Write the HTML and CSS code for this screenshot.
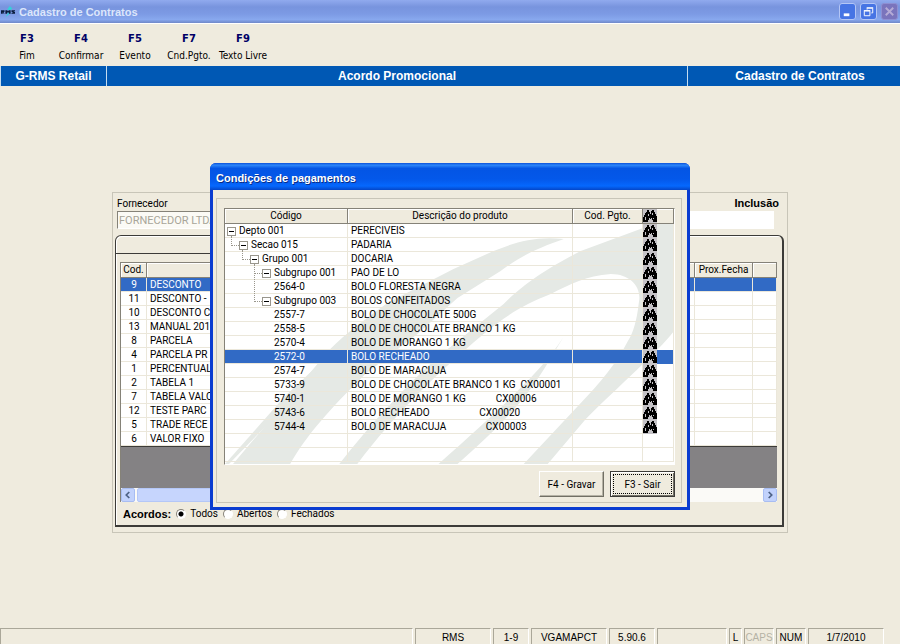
FILE: index.html
```html
<!DOCTYPE html>
<html lang="pt-BR">
<head>
    <meta charset="UTF-8">
    <meta name="viewport" content="width=device-width, initial-scale=1.0">
    <title>Cadastro de Contratos</title>
    <link rel="stylesheet" href="styles.css">
</head>
<body>
    <!-- Shared icons -->
    <svg class="defs" width="0" height="0">
        <symbol id="binoculars" viewBox="0 0 14 14">
            <rect width="14" height="14" fill="#c4c2c6"/>
            <path d="M4 1h2v2h1v2h1V2h1V1h2v2h1v2h1v2h1v6h-4v-2H9V9H8v1H7V9H6v2H5v2H0V8h1V6h1V4h1V3h1z" fill="#000"/>
            <path d="M2 8h1v3H2zM5 5h1v2H5zM9 4h1v2H9zM10 9h1v1h-1z" fill="#c4c2c6"/>
        </symbol>
    </svg>

    <div class="app">
        <header class="titlebar">
            <svg class="logo" viewBox="0 0 16 16">
                <path d="M10 1L7 5l3 1-5 8 6-5-2-2 4-3z" fill="#35d0d8"/>
                <path d="M0 6h4v2H3l1 2H3L2 8v2H0zM5 6h2l1 1 1-1h2v4H9V8L8 9 7 8v2H5zM12 6h4v1h-2l2 1v2h-4V9h2l-2-1z" fill="#0a1c3c"/>
            </svg>
            <h1>Cadastro de Contratos</h1>
            <button class="win-btn" type="button" aria-label="Minimizar"><svg viewBox="0 0 16 16"><path d="M4 10h6v3H4z" fill="#fff"/></svg></button>
            <button class="win-btn" type="button" aria-label="Restaurar"><svg viewBox="0 0 16 16"><path d="M6.500 6V4.500h6v5H11M6 4h7M3.500 7.500h6v5h-6zM3 7h7" fill="none" stroke="#fff"/></svg></button>
            <button class="win-btn close" type="button" aria-label="Fechar"><svg viewBox="0 0 16 16"><path d="M4 4l8 8M12 4l-8 8" stroke="#b5abd6" stroke-width="2"/></svg></button>
        </header>

        <nav class="toolbar">
            <button type="button"><b>F3</b>Fim</button>
            <button type="button"><b>F4</b>Confirmar</button>
            <button type="button"><b>F5</b>Evento</button>
            <button type="button"><b>F7</b>Cnd.Pgto.</button>
            <button type="button"><b>F9</b>Texto Livre</button>
        </nav>

        <div class="banner">
            <span class="banner-side left">G-RMS Retail</span>
            <span class="banner-main">Acordo Promocional</span>
            <span class="banner-side right">Cadastro de Contratos</span>
        </div>

        <main class="workspace">
            <section class="panel">
                <div class="panel-head">
                    <label for="fornecedor">Fornecedor</label>
                    <strong>Inclusão</strong>
                </div>
                <div class="panel-fields">
                    <input type="text" id="fornecedor" value="FORNECEDOR LTDA" disabled>
                    <input type="text" class="plain" aria-label="Situação">
                </div>

                <div class="tab-frame">
                    <div class="tab-strip"></div>
                    <div class="list-box">
                        <table class="grid agreements">
                            <colgroup>
                                <col class="c-cod">
                                <col>
                                <col class="c-date">
                                <col class="c-end">
                            </colgroup>
                            <thead>
                                <tr><th>Cod.</th><th></th><th>Prox.Fecha</th><th></th></tr>
                            </thead>
                            <tbody>
                                <tr class="selected"><td>9</td><td>DESCONTO</td><td></td><td></td></tr>
                                <tr><td>11</td><td>DESCONTO -</td><td></td><td></td></tr>
                                <tr><td>10</td><td>DESCONTO C</td><td></td><td></td></tr>
                                <tr><td>13</td><td>MANUAL 2010</td><td></td><td></td></tr>
                                <tr><td>8</td><td>PARCELA</td><td></td><td></td></tr>
                                <tr><td>4</td><td>PARCELA PR</td><td></td><td></td></tr>
                                <tr><td>1</td><td>PERCENTUAL</td><td></td><td></td></tr>
                                <tr><td>2</td><td>TABELA 1</td><td></td><td></td></tr>
                                <tr><td>7</td><td>TABELA VALO</td><td></td><td></td></tr>
                                <tr><td>12</td><td>TESTE PARC</td><td></td><td></td></tr>
                                <tr><td>5</td><td>TRADE RECE</td><td></td><td></td></tr>
                                <tr><td>6</td><td>VALOR FIXO</td><td></td><td></td></tr>
                            </tbody>
                        </table>
                        <div class="list-empty"></div>
                        <div class="scrollbar">
                            <button type="button" aria-label="Rolar para a esquerda"><svg viewBox="0 0 14 14"><path d="M8.500 3.500L5 7l3.500 3.500" fill="none" stroke="#4d6185" stroke-width="2"/></svg></button>
                            <div class="thumb"></div>
                            <button type="button" aria-label="Rolar para a direita"><svg viewBox="0 0 14 14"><path d="M5.500 3.500L9 7l-3.500 3.500" fill="none" stroke="#4d6185" stroke-width="2"/></svg></button>
                        </div>
                    </div>
                    <div class="filters">
                        <strong>Acordos:</strong>
                        <label><input type="radio" name="acordos" checked>Todos</label>
                        <label><input type="radio" name="acordos">Abertos</label>
                        <label><input type="radio" name="acordos">Fechados</label>
                    </div>
                </div>
            </section>

            <!-- Payment terms dialog -->
            <div class="overlay">
                <section class="dialog" role="dialog" aria-labelledby="dialog-title">
                    <h2 id="dialog-title">Condições de pagamentos</h2>
                    <div class="dialog-body">
                        <div class="dialog-frame">
                            <div class="product-box">
                                <svg class="watermark" viewBox="0 0 448 240" preserveAspectRatio="none">
                                    <path d="M338 15C310 12 290 18 268 27L228 45 162 79C140 95 122 108 104 126L8 240H65C82 210 105 185 140 150L192 110 232 74 275 47C295 32 310 25 338 15z"/>
                                    <path d="M124 112L60 172 0 240 4 240 66 176z"/>
                                    <path d="M448 0H428L355 27C310 50 290 68 278 80L210 135C180 163 145 200 114 240H132C170 190 205 155 258 110C285 88 300 80 325 70C345 60 360 52 385 50C405 50 416 64 413 78Q410 105 402 117C390 140 375 158 355 179L298 240H322L360 195C395 160 430 130 448 107z"/>
                                    <path d="M342 106C325 135 300 163 213 240H232C270 206 300 178 325 134z"/>
                                </svg>
                                <table class="grid products">
                                    <colgroup>
                                        <col class="c-code">
                                        <col>
                                        <col class="c-pay">
                                        <col class="c-find">
                                    </colgroup>
                                    <thead>
                                        <tr><th>Código</th><th>Descrição do produto</th><th>Cod. Pgto.</th><th class="find"><svg><use href="#binoculars"/></svg></th></tr>
                                    </thead>
                                    <tbody>
                                        <tr><td class="lv0"><i class="node root"></i>Depto 001</td><td>PERECIVEIS</td><td></td><td class="find"><svg><use href="#binoculars"/></svg></td></tr>
                                        <tr><td class="lv1"><i class="node"></i>Secao 015</td><td>PADARIA</td><td></td><td class="find"><svg><use href="#binoculars"/></svg></td></tr>
                                        <tr><td class="lv2"><i class="node"></i>Grupo 001</td><td>DOCARIA</td><td></td><td class="find"><svg><use href="#binoculars"/></svg></td></tr>
                                        <tr><td class="lv3"><i class="node"></i>Subgrupo 001</td><td>PAO DE LO</td><td></td><td class="find"><svg><use href="#binoculars"/></svg></td></tr>
                                        <tr><td class="leaf">2564-0</td><td>BOLO FLORESTA NEGRA</td><td></td><td class="find"><svg><use href="#binoculars"/></svg></td></tr>
                                        <tr><td class="lv3"><i class="node long"></i>Subgrupo 003</td><td>BOLOS CONFEITADOS</td><td></td><td class="find"><svg><use href="#binoculars"/></svg></td></tr>
                                        <tr><td class="leaf">2557-7</td><td>BOLO DE CHOCOLATE 500G</td><td></td><td class="find"><svg><use href="#binoculars"/></svg></td></tr>
                                        <tr><td class="leaf">2558-5</td><td>BOLO DE CHOCOLATE BRANCO 1 KG</td><td></td><td class="find"><svg><use href="#binoculars"/></svg></td></tr>
                                        <tr><td class="leaf">2570-4</td><td>BOLO DE MORANGO 1 KG</td><td></td><td class="find"><svg><use href="#binoculars"/></svg></td></tr>
                                        <tr class="selected"><td class="leaf">2572-0</td><td>BOLO RECHEADO</td><td></td><td class="find"><svg><use href="#binoculars"/></svg></td></tr>
                                        <tr><td class="leaf">2574-7</td><td>BOLO DE MARACUJA</td><td></td><td class="find"><svg><use href="#binoculars"/></svg></td></tr>
                                        <tr><td class="leaf">5733-9</td><td>BOLO DE CHOCOLATE BRANCO 1 KG  CX00001</td><td></td><td class="find"><svg><use href="#binoculars"/></svg></td></tr>
                                        <tr><td class="leaf">5740-1</td><td>BOLO DE MORANGO 1 KG            CX00006</td><td></td><td class="find"><svg><use href="#binoculars"/></svg></td></tr>
                                        <tr><td class="leaf">5743-6</td><td>BOLO RECHEADO                    CX00020</td><td></td><td class="find"><svg><use href="#binoculars"/></svg></td></tr>
                                        <tr><td class="leaf">5744-4</td><td>BOLO DE MARACUJA                CX00003</td><td></td><td class="find"><svg><use href="#binoculars"/></svg></td></tr>
                                        <tr><td></td><td></td><td></td><td></td></tr>
                                        <tr><td></td><td></td><td></td><td></td></tr>
                                    </tbody>
                                </table>
                            </div>
                            <div class="dialog-actions">
                                <button type="button">F4 - Gravar</button>
                                <button type="button" class="default">F3 - Sair</button>
                            </div>
                        </div>
                    </div>
                </section>
            </div>
        </main>

        <footer class="statusbar">
            <span class="grow"></span>
            <span class="w-xl">RMS</span>
            <span class="w-n">1-9</span>
            <span class="w-xl">VGAMAPCT</span>
            <span class="w-m">5.90.6</span>
            <span class="w-l"></span>
            <span class="w-xs">L</span>
            <span class="w-s off">CAPS</span>
            <span class="w-s">NUM</span>
            <span class="w-xl">1/7/2010</span>
        </footer>
    </div>
</body>
</html>
```

FILE: styles.css
```css
* {
    box-sizing: border-box;
}

body {
    margin: 0;
    background-color: #efebde;
    color: #000;
    font-family: Roboto, "Liberation Sans", sans-serif;
    font-size: 10px;
}

button, input {
    font: inherit;
    color: inherit;
}

button {
    padding: 0;
    border: none;
    background: none;
}

.defs {
    position: absolute;
}

.app {
    display: flex;
    flex-direction: column;
    min-height: 100vh;
}

/* Window title */
.titlebar {
    display: flex;
    align-items: center;
    gap: 4px;
    height: 23px;
    padding: 0 2px 0 1px;
    background: linear-gradient(#90aaee, #7894de 30%, #7c9ae4 60%, #88a8ee 85%, #7088c8);
}

.logo {
    width: 14px;
    height: 16px;
}

.titlebar h1 {
    flex: 1;
    margin: 0;
    color: #dce6fb;
    font: bold 11px "Liberation Sans", sans-serif;
}

.win-btn {
    width: 17px;
    height: 17px;
    border: 1px solid #b4c6f6;
    border-radius: 3px;
    background-color: #4674e4;
}

.win-btn svg {
    display: block;
    width: 15px;
    height: 15px;
}

.win-btn.close {
    border-color: #8e8fd2;
    background-color: #7a74bc;
}

/* Function keys */
.toolbar {
    display: flex;
    height: 43px;
    padding: 3px 0 0;
    border-top: 1px solid #fff;
}

.toolbar button {
    width: 54px;
    font: 10px/17px "DejaVu Sans Condensed", sans-serif;
    white-space: nowrap;
}

.toolbar b {
    display: block;
    color: #000066;
    font-family: "DejaVu Sans", sans-serif;
}

.banner {
    display: flex;
    height: 20px;
    background-color: #0058b4;
    color: #fff;
    font: bold 12px/20px "Liberation Sans", sans-serif;
    text-align: center;
}

.banner-main {
    flex: 1;
    border-left: 1px solid #c4dcf0;
    border-right: 1px solid #c4dcf0;
}

.banner-side.left {
    width: 106px;
    border-left: 1px solid #c4dcf0;
}

.banner-side.right {
    width: 212px;
    padding-left: 12px;
}

/* Contract panel */
.workspace {
    position: relative;
    flex: 1;
    padding: 106px 112px 0;
}

.panel {
    padding: 3px 3px 5px 2px;
    border: 1px solid #c8c5b8;
}

.panel-head {
    display: flex;
    justify-content: space-between;
    padding: 0 5px 0 2px;
    line-height: 15px;
}

.panel-head strong {
    font: bold 11px/15px "Liberation Sans", sans-serif;
}

.panel-fields {
    display: flex;
    justify-content: space-between;
    padding: 0 10px 0 2px;
}

.panel-fields input {
    width: 320px;
    height: 18px;
    padding: 0 1px;
    border: 1px solid #fff;
    border-top-color: #858278;
    border-left-color: #858278;
    background-color: #fbfaf5;
    font-size: 11px;
}

.panel-fields input:disabled {
    color: #a8a599;
}

.panel-fields .plain {
    border-color: #fff;
    background-color: #fff;
}

.tab-frame {
    margin-top: 6px;
    border: 1px solid #3c3b38;
    border-right-width: 2px;
    border-bottom-width: 2px;
    border-radius: 6px 6px 0 0;
    box-shadow: inset 1px 1px #fff;
}

.tab-strip {
    width: 50%;
    height: 18px;
    border-bottom: 1px solid #3c3b38;
}

.list-box {
    margin: 8px 5px 0 4px;
    border-top: 1px solid #858278;
    border-left: 1px solid #858278;
}

.grid {
    width: 100%;
    border-spacing: 0;
    table-layout: fixed;
    line-height: 13px;
}

.grid th, .grid td {
    height: 14px;
    padding: 0 2px 0 3px;
    overflow: hidden;
    border-right: 1px solid #ebe7da;
    border-bottom: 1px solid #ebe7da;
    white-space: pre;
}

.grid th {
    height: 15px;
    padding: 0 1px;
    border-color: #858278;
    background-color: #efebde;
    box-shadow: inset 1px 1px #fff;
    font-weight: normal;
    line-height: 14px;
    text-align: center;
}

.grid .selected td {
    background-color: #316ac5;
    color: #fff;
}

.agreements td {
    background-color: #fff;
}

.agreements td:first-child {
    text-align: center;
}

.c-cod {
    width: 26px;
}

.c-date {
    width: 58px;
}

.c-end {
    width: 24px;
}

.list-empty {
    height: 42px;
    border-top: 1px solid #3c3b38;
    background-color: #848284;
}

.scrollbar {
    display: flex;
    height: 14px;
    background-color: #fbfaf7;
}

.scrollbar button {
    width: 14px;
    border: 1px solid #a8bdf2;
    border-radius: 2px;
    background-color: #c2d2fc;
}

.scrollbar svg {
    display: block;
    width: 12px;
    height: 12px;
}

.thumb {
    width: 60%;
    margin: 0 auto 0 2px;
    border: 1px solid #b4c7f7;
    border-radius: 2px;
    background-color: #c6d5fd;
}

.filters {
    display: flex;
    align-items: center;
    gap: 5px;
    height: 23px;
    padding-left: 7px;
}

.filters strong {
    font: bold 11px "Liberation Sans", sans-serif;
}

.filters label {
    display: flex;
    align-items: center;
    gap: 4px;
}

.filters input {
    width: 10px;
    height: 10px;
    margin: 0;
    appearance: none;
    border: 1px solid #fff;
    border-top-color: #858278;
    border-left-color: #858278;
    border-radius: 50%;
    background-color: #fff;
}

.filters input:checked {
    background-image: radial-gradient(circle, #000 2px, #fff 3px);
}

/* Dialog */
.overlay {
    position: absolute;
    inset: 0;
    display: flex;
    justify-content: center;
    align-items: flex-start;
    padding-top: 77px;
}

.dialog {
    width: 480px;
    padding: 0 3px 3px;
    border-radius: 6px 6px 0 0;
    background-color: #0a3cd0;
}

.dialog h2 {
    margin: 0 -3px;
    padding: 3px 6px 0;
    border-radius: 6px 6px 0 0;
    background: linear-gradient(#0a50d8, #2c86fa 8%, #0455e4 20%, #0458ea 60%, #0568fe 85%, #0446c8);
    color: #fff;
    font: bold 11px/24px "Liberation Sans", sans-serif;
    text-shadow: 1px 1px #0a2c84;
}

.dialog-body {
    padding: 8px 5px 4px 3px;
    background-color: #efebde;
}

.dialog-frame {
    padding: 9px 6px 5px 7px;
    border: 1px solid #c8c5b8;
}

.product-box {
    position: relative;
    padding-bottom: 2px;
    border: 1px solid #fff;
    border-top-color: #858278;
    border-left-color: #858278;
    background-color: #fff;
}

.watermark {
    position: absolute;
    top: 15px;
    left: 0;
    width: 100%;
    height: 240px;
    fill: #e5e9e5;
}

.products {
    position: relative;
}

.c-code {
    width: 123px;
}

.c-pay {
    width: 70px;
}

.c-find {
    width: 31px;
}

.grid .find {
    padding: 0;
    line-height: 0;
}

.grid td.find {
    border-bottom: none;
}

.find svg {
    display: block;
    width: 14px;
    height: 14px;
}

.grid .lv0 {
    padding-left: 2px;
}

.grid .lv1 {
    padding-left: 14px;
}

.grid .lv2 {
    padding-left: 25px;
}

.grid .lv3 {
    padding-left: 37px;
}

.grid .leaf {
    padding-left: 49px;
}

/* Tree: collapse box with its dotted connector */
.products td:first-child {
    overflow: visible;
}

.node {
    position: relative;
    display: inline-block;
    width: 9px;
    height: 9px;
    margin-right: 3px;
    border: 1px solid #99968c;
    background: linear-gradient(#000, #000) center / 5px 1px no-repeat #fff;
    vertical-align: middle;
}

.node::before {
    content: "";
    position: absolute;
    right: 8px;
    bottom: 3px;
    width: 7px;
    height: 9px;
    border-left: 1px dotted #99968c;
    border-bottom: 1px dotted #99968c;
}

.node.long::before {
    height: 37px;
}

.node.root::before {
    display: none;
}

.dialog-actions {
    display: flex;
    justify-content: flex-end;
    gap: 6px;
    margin-top: 6px;
}

.dialog-actions button {
    width: 65px;
    height: 26px;
    border: 1px solid #fff;
    border-right-color: #716f64;
    border-bottom-color: #716f64;
    background-color: #efebde;
    box-shadow: inset -1px -1px #b5b2a5;
}

.dialog-actions .default {
    border: 1px solid #3c3b38;
    box-shadow: inset 1px 1px #fff, inset -1px -1px #716f64;
    outline: 1px dotted #000;
    outline-offset: -4px;
}

/* Status bar */
.statusbar {
    display: flex;
    gap: 2px;
    height: 16px;
    padding-right: 16px;
    font: 10px/18px "Liberation Sans", sans-serif;
    text-align: center;
}

.statusbar span {
    border-top: 1px solid #aaa799;
    border-left: 1px solid #aaa799;
    border-right: 1px solid #fff;
}

.statusbar .grow {
    flex: 1;
}

.w-xl {
    width: 76px;
}

.w-l {
    width: 70px;
}

.w-m {
    width: 46px;
}

.w-n {
    width: 36px;
}

.w-s {
    width: 30px;
}

.w-xs {
    width: 13px;
}

.off {
    color: #b5b2a5;
}
```
